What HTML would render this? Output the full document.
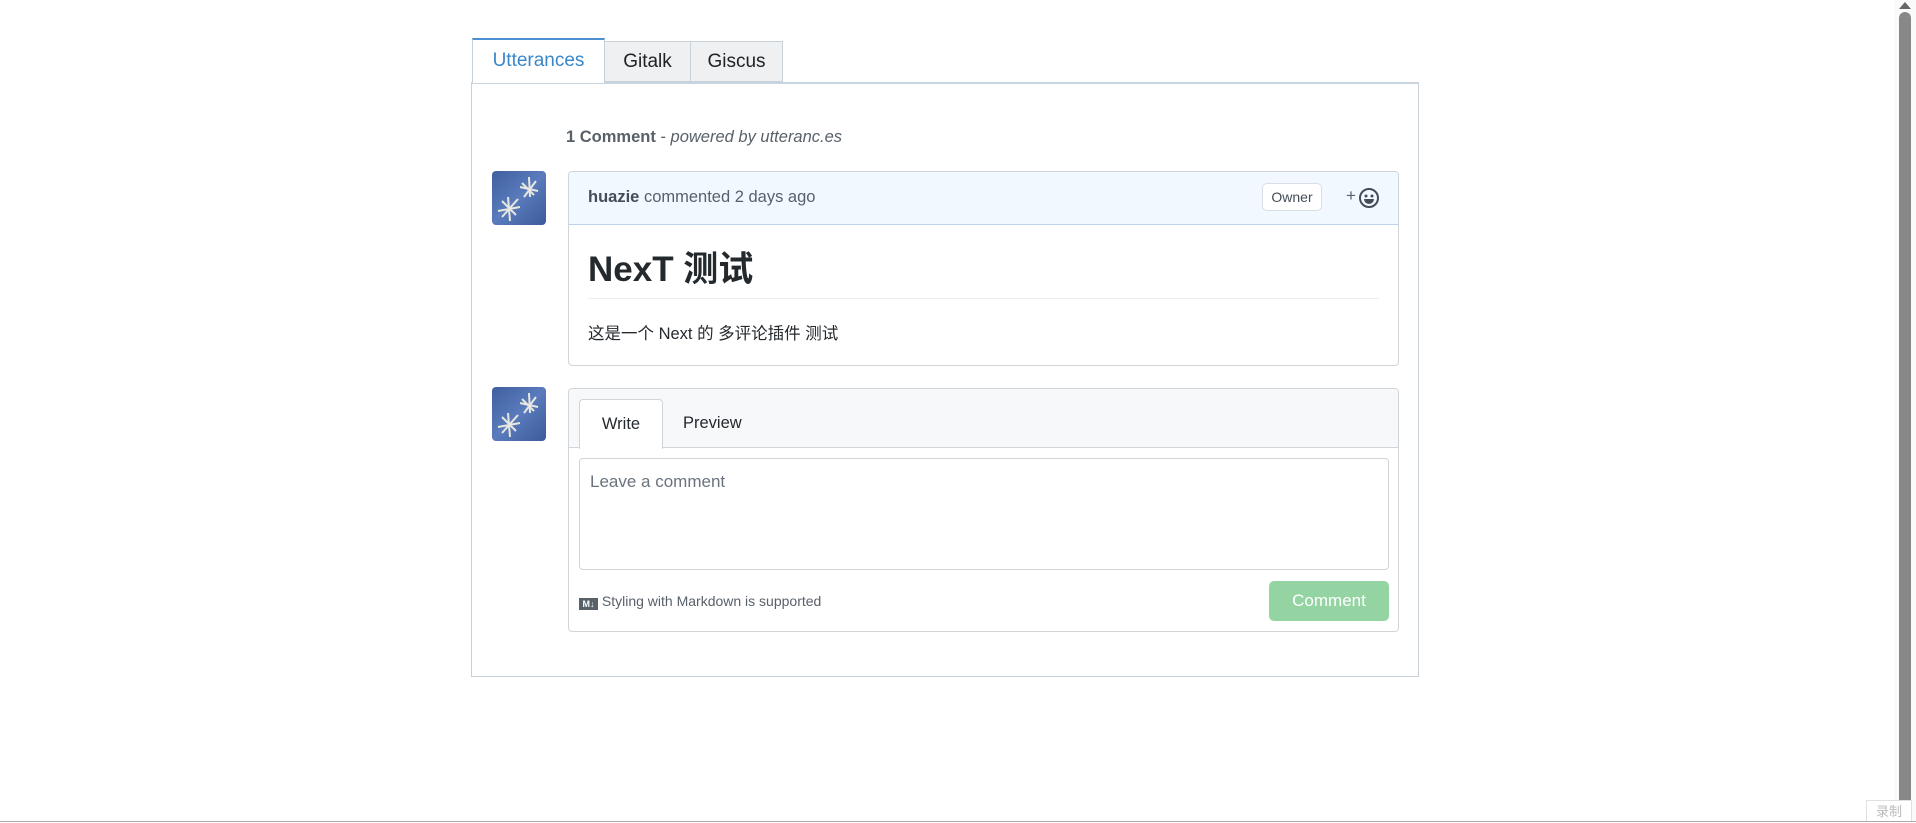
<!DOCTYPE html>
<html><head><meta charset="utf-8"><style>
*{box-sizing:border-box;margin:0;padding:0}
body{width:1916px;height:822px;background:#fff;position:relative;overflow:hidden;font-family:"Liberation Sans","Noto Sans CJK SC",sans-serif;color:#24292e}
.a{position:absolute}
.tab{position:absolute;font-size:19px;text-align:center;border:1px solid #c8d0d8;background:#eef0f2;color:#222}
.av{position:absolute;width:54px;height:54px;border-radius:4px;background:linear-gradient(135deg,#3f5f9e,#5a7cbc 50%,#3b5a98);overflow:hidden}
</style></head><body>
<div class="tab" style="left:472px;top:38px;width:133px;height:45px;background:#fff;border-top:2px solid #4a90d0;border-bottom:none;color:#3a86c8;line-height:42px;z-index:2">Utterances</div>
<div class="tab" style="left:604px;top:41px;width:87px;height:41px;line-height:40px">Gitalk</div>
<div class="tab" style="left:690px;top:41px;width:93px;height:41px;line-height:40px">Giscus</div>
<div class="a" style="left:471px;top:82px;width:948px;height:595px;border:1px solid #c8d0d8;border-top:2px solid #c8d4e0"></div>

<div class="a" style="left:566px;top:128px;font-size:16.5px;color:#586069"><b>1 Comment</b> - <i>powered by utteranc.es</i></div>

<div class="av" style="left:492px;top:171px"><svg width="54" height="54" stroke="#e8e8e0" stroke-width="2" fill="none"><path d="M30 12l12 12M44 10l-12 16M37 6l1 20M28 16l18 4"/><path d="M10 30l14 14M26 28l-16 18M16 26l2 24M6 40l22-4"/></svg></div>
<div class="a" style="left:568px;top:171px;width:831px;height:195px;border:1px solid #d1d5da;border-radius:4px;overflow:hidden">
 <div style="height:53px;background:#f1f8ff;border-bottom:1px solid #c0d3eb;position:relative">
  <div class="a" style="left:19px;top:16px;font-size:16.5px;color:#586069"><b style="color:#444d56">huazie</b> commented 2 days ago</div>
  <div class="a" style="left:693px;top:11px;width:60px;height:28px;border:1px solid #d8dee4;border-radius:5px;background:#fff;font-size:14px;line-height:26px;text-align:center;color:#444d56">Owner</div>
  <div class="a" style="left:777px;top:14px;font-size:17px;color:#586069">+</div>
  <svg class="a" style="left:789px;top:15px" width="22" height="22"><circle cx="11" cy="11" r="9" fill="none" stroke="#444d56" stroke-width="2"/><circle cx="8" cy="9" r="1.5" fill="#444d56"/><circle cx="14" cy="9" r="1.5" fill="#444d56"/><path d="M6 12h10a5 5 0 0 1-10 0z" fill="#444d56"/></svg>
 </div>
 <div class="a" style="left:19px;top:69px;font-size:35px;font-weight:bold">NexT 测试</div>
 <div class="a" style="left:19px;top:126px;width:791px;border-top:1px solid #eaecef"></div>
 <div class="a" style="left:19px;top:148px;font-size:16.5px">这是一个 Next 的 多评论插件 测试</div>
</div>

<div class="av" style="left:492px;top:387px"><svg width="54" height="54" stroke="#e8e8e0" stroke-width="2" fill="none"><path d="M30 12l12 12M44 10l-12 16M37 6l1 20M28 16l18 4"/><path d="M10 30l14 14M26 28l-16 18M16 26l2 24M6 40l22-4"/></svg></div>
<div class="a" style="left:568px;top:388px;width:831px;height:244px;border:1px solid #d1d5da;border-radius:4px;overflow:hidden">
 <div style="height:59px;background:#f6f8fa;border-bottom:1px solid #d1d5da;position:relative">
  <div class="a" style="left:10px;top:10px;width:84px;height:50px;background:#fff;border:1px solid #d1d5da;border-bottom:none;border-radius:4px 4px 0 0;font-size:16.5px;text-align:center;line-height:48px">Write</div>
  <div class="a" style="left:114px;top:10px;font-size:16.5px;line-height:48px">Preview</div>
 </div>
 <div class="a" style="left:10px;top:69px;width:810px;height:112px;border:1px solid #d1d5da;border-radius:4px;font-size:17px;color:#6a737d;padding:13px 10px">Leave a comment</div>
 <div class="a" style="left:10px;top:204px;font-size:14px;color:#586069"><span style="display:inline-block;width:19px;height:12px;background:#586069;color:#fff;font-size:9px;line-height:12px;text-align:center;font-weight:bold;vertical-align:-1px">M↓</span> Styling with Markdown is supported</div>
 <div class="a" style="left:700px;top:192px;width:120px;height:40px;background:#94d3a2;border-radius:5px;color:#fff;font-size:17px;text-align:center;line-height:40px">Comment</div>
</div>

<div class="a" style="left:1894px;top:0;width:22px;height:822px;background:#fafafa"></div>
<div class="a" style="left:1899px;top:2px;width:0;height:0;border-left:6px solid transparent;border-right:6px solid transparent;border-bottom:7px solid #666"></div>
<div class="a" style="left:1899px;top:12px;width:12px;height:810px;background:#888;border-radius:6px 6px 0 0"></div>
<div class="a" style="left:1866px;top:800px;width:46px;height:22px;border:1px solid #e0e0e0;background:#fff;color:#bbb;font-size:13px;text-align:center;line-height:22px">录制</div>
<div class="a" style="left:0;top:821px;width:1916px;height:1px;background:#aaa"></div>
</body></html>
